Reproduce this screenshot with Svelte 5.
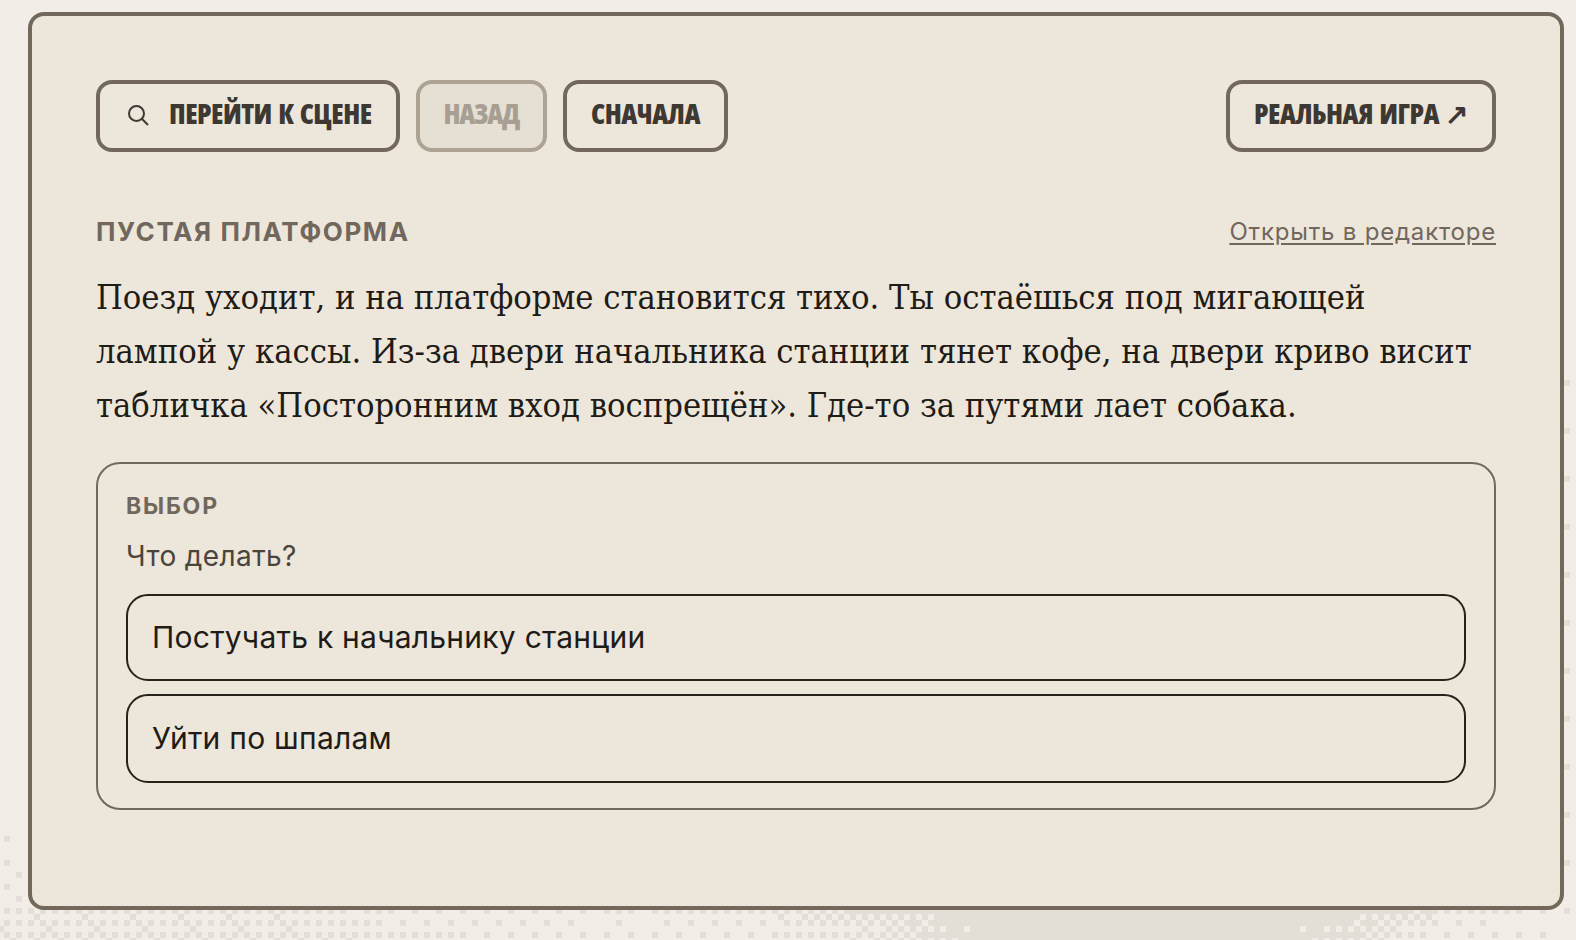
<script lang="ts">
  import { onMount } from "svelte";

  const CELL = 6;
  const BAYER = [
    [0, 32, 8, 40, 2, 34, 10, 42],
    [48, 16, 56, 24, 50, 18, 58, 26],
    [12, 44, 4, 36, 14, 46, 6, 38],
    [60, 28, 52, 20, 62, 30, 54, 22],
    [3, 35, 11, 43, 1, 33, 9, 41],
    [51, 19, 59, 27, 49, 17, 57, 25],
    [15, 47, 7, 39, 13, 45, 5, 37],
    [63, 31, 55, 23, 61, 29, 53, 21],
  ];

  // faint wash that rises from the bottom left
  const wash = [
    [0, 19], [290, 19], [380, 14], [480, 7], [640, 5.5], [1576, 2.5],
  ];
  const washFade = [
    [360, 0], [380, 0.04], [800, 0.04], [836, 0.08], [860, 0.16], [872, 0.34],
    [884, 0.39], [900, 0.5], [908, 0.6], [914, 0.9], [920, 1], [938, 1.25],
  ];
  // dark blob below the panel, sampled at y = 920
  const BLOB_CENTER = 1135;
  const blob = [
    [640, 0], [700, 8], [790, 14], [830, 22], [870, 30], [900, 40], [930, 48],
    [960, 58], [990, 66], [1270, 66], [1300, 62], [1340, 50], [1375, 34],
    [1410, 18], [1440, 12], [1460, 7], [1520, 3], [1576, 0],
  ];
  const blobWidth = [
    [908, 1.2], [920, 1], [938, 0.92],
  ];

  function lerp(points: number[][], at: number) {
    if (at <= points[0][0]) return points[0][1];
    for (let i = 1; i < points.length; i++) {
      if (at <= points[i][0]) {
        const [x0, y0] = points[i - 1];
        const [x1, y1] = points[i];
        return y0 + ((y1 - y0) * (at - x0)) / (x1 - x0);
      }
    }
    return points[points.length - 1][1];
  }

  function density(x: number, y: number) {
    const soft = lerp(wash, x) * lerp(washFade, y);
    if (y < 905) return soft;
    const dark = lerp(blob, BLOB_CENTER + (x - BLOB_CENTER) / lerp(blobWidth, y));
    return Math.max(soft, dark);
  }

  let canvas: HTMLCanvasElement;

  onMount(() => {
    const ctx = canvas.getContext("2d");
    if (!ctx) return;
    ctx.fillStyle = "#e3ded6";
    for (let iy = 0; iy * CELL + 2 < 940; iy++) {
      for (let ix = -1; ix * CELL + 4 < 1576; ix++) {
        const x = ix * CELL + 4;
        const y = iy * CELL + 2;
        const threshold = BAYER[(iy + 1) % 8][(ix + 12) % 8];
        if (threshold < density(x, y)) ctx.fillRect(x, y, CELL, CELL);
      }
    }
  });
</script>

<canvas class="dither" bind:this={canvas} width="1576" height="940"></canvas>

<main class="page">
  <section class="panel">
    <nav class="toolbar">
      <button class="btn">
        <svg class="search" viewBox="0 0 22 22" aria-hidden="true">
          <circle cx="9.5" cy="9.5" r="7.5" />
          <line x1="14.8" y1="14.8" x2="21" y2="21" />
        </svg>
        ПЕРЕЙТИ К СЦЕНЕ
      </button>
      <button class="btn" disabled>НАЗАД</button>
      <button class="btn">СНАЧАЛА</button>
      <button class="btn real">РЕАЛЬНАЯ ИГРА ↗</button>
    </nav>

    <header class="scene-head">
      <span class="eyebrow">ПУСТАЯ ПЛАТФОРМА</span>
      <a class="edit" href="#edit">Открыть в редакторе</a>
    </header>

    <p class="story">
      Поезд уходит, и на платформе становится тихо. Ты остаёшься под мигающей<br />
      лампой у кассы. Из-за двери начальника станции тянет кофе, на двери криво висит<br />
      табличка «Посторонним вход воспрещён». Где-то за путями лает собака.
    </p>

    <div class="choice">
      <span class="choice-label">ВЫБОР</span>
      <span class="prompt">Что делать?</span>
      <button class="option">Постучать к начальнику станции</button>
      <button class="option">Уйти по шпалам</button>
    </div>
  </section>
</main>

<style>
  :global(body) {
    background: #f2eee7;
    overflow: hidden;
  }

  .dither {
    position: fixed;
    inset: 0;
    z-index: 0;
  }

  .page {
    position: relative;
    z-index: 1;
    box-sizing: border-box;
    height: 940px;
    padding: 12px 12px 30px 28px;
    font-family: Inter, "Liberation Sans", sans-serif;
  }

  .panel {
    box-sizing: border-box;
    height: 898px;
    padding: 64px;
    background: #ede6da;
    border: 4px solid #72695c;
    border-radius: 16px;
  }

  .toolbar {
    display: flex;
    gap: 16px;
  }

  .btn {
    box-sizing: border-box;
    display: flex;
    align-items: center;
    gap: 20px;
    height: 72px;
    padding: 0 24px 7px;
    background: transparent;
    border: 4px solid #72695c;
    border-radius: 16px;
    color: #3e3832;
    font-family: "Open Sans", "Liberation Sans", sans-serif;
    font-stretch: 75%;
    font-weight: 800;
    font-size: 28px;
    letter-spacing: -0.5px;
    word-spacing: 2px;
    white-space: nowrap;
  }

  .btn:disabled {
    background: #e6dfd3;
    border-color: #aca395;
    color: #a89f94;
    letter-spacing: -1.3px;
  }

  .real {
    margin-left: auto;
  }

  .search {
    width: 22px;
    height: 22px;
    margin: 5px 0 0 3px;
    fill: none;
    stroke: #3e3832;
    stroke-width: 2;
  }

  .scene-head {
    display: flex;
    justify-content: space-between;
    align-items: center;
    margin-top: 64px;
  }

  .eyebrow {
    color: #71675d;
    font-weight: 700;
    font-size: 26px;
    letter-spacing: 1.6px;
  }

  .edit {
    color: #71675d;
    font-size: 24px;
    letter-spacing: 0.8px;
    text-underline-offset: 3px;
  }

  .story {
    margin: 23px 0 0;
    color: #1f1b16;
    font-family: "DejaVu Serif Condensed", "DejaVu Serif", serif;
    font-size: 34.2px;
    line-height: 54px;
  }

  .choice {
    box-sizing: border-box;
    display: flex;
    flex-direction: column;
    margin-top: 30px;
    padding: 28px;
    height: 348px;
    border: 2px solid #72695c;
    border-radius: 24px;
  }

  .choice-label {
    color: #71675d;
    font-weight: 700;
    font-size: 23px;
    letter-spacing: 1.8px;
  }

  .prompt {
    margin-top: 19px;
    margin-bottom: 7px;
    color: #4a443c;
    font-size: 28px;
    letter-spacing: 0.4px;
  }

  .option {
    flex: none;
    height: 87.5px;
    margin-top: 13.5px;
    padding: 0 24px;
    background: transparent;
    border: 2.5px solid #26221c;
    border-radius: 22px;
    color: #1f1b16;
    font-family: Inter, "Liberation Sans", sans-serif;
    font-size: 30px;
    letter-spacing: 0.25px;
    text-align: left;
  }

  .option + .option {
    height: 89.5px;
    margin-top: 12.5px;
  }
</style>
